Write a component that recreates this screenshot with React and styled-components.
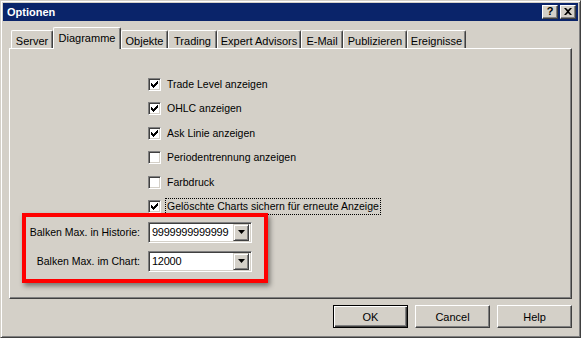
import React from 'react';
import styled, { createGlobalStyle } from 'styled-components';

const Global = createGlobalStyle`
  html, body { margin: 0; padding: 0; background: #d4d0c8; }
  body { font-family: "Liberation Sans", Arial, sans-serif; font-size: 10.5px; color: #000; }
  * { box-sizing: border-box; }
`;

const Window = styled.div`
  width: 581px;
  height: 338px;
  background: #d4d0c8;
  border: 1px solid;
  border-color: #d4d0c8 #404040 #404040 #d4d0c8;
  box-shadow: inset 1px 1px #fff, inset -1px -1px #808080;
  padding: 2px;
  display: flex;
  flex-direction: column;
`;

const TitleBar = styled.div`
  height: 18px;
  background: #0a246a;
  display: flex;
  align-items: center;
  padding: 0 2px 0 2px;
  gap: 2px;
`;

const Title = styled.div`
  flex: 1;
  color: #fff;
  font-weight: bold;
  font-size: 11px;
  padding-left: 2px;
`;

const CaptionButton = styled.div`
  width: 16px;
  height: 14px;
  background: #d4d0c8;
  border: 1px solid;
  border-color: #fff #404040 #404040 #fff;
  box-shadow: inset -1px -1px #808080;
  display: flex;
  align-items: center;
  justify-content: center;
  font-weight: bold;
  font-size: 11px;
  line-height: 1;
  padding-bottom: 1px;
`;

const Body = styled.div`
  padding: 6px 6px 0 6px;
  display: flex;
  flex-direction: column;
`;

const TabStrip = styled.div`
  height: 21px;
  display: flex;
  align-items: flex-end;
  padding-left: 2px;
`;

const Tab = styled.div`
  width: ${p => p.w}px;
  height: ${p => (p.active ? 22 : 18)}px;
  margin-bottom: ${p => (p.active ? -1 : 0)}px;
  position: relative;
  z-index: ${p => (p.active ? 2 : 0)};
  background: #d4d0c8;
  border-top: 1px solid #fff;
  border-left: 1px solid #fff;
  border-right: 1px solid #404040;
  border-top-left-radius: 2px;
  border-top-right-radius: 2px;
  box-shadow: inset -1px 0 #808080;
  display: flex;
  align-items: center;
  justify-content: center;
  font-size: 11px;
  padding-top: ${p => (p.active ? 0 : 2)}px;
  padding-bottom: ${p => (p.active ? 2 : 0)}px;
  white-space: nowrap;
`;

const Panel = styled.div`
  height: 251px;
  background: #d4d0c8;
  border: 1px solid;
  border-color: #fff #404040 #404040 #fff;
  box-shadow: inset -1px -1px #808080;
  padding: 28px 0 0 12px;
  display: flex;
  flex-direction: column;
`;

const CheckList = styled.div`
  display: flex;
  flex-direction: column;
  gap: 9.4px;
  padding-left: 126px;
`;

const CheckRow = styled.label`
  height: 15px;
  display: flex;
  align-items: center;
  gap: 4px;
`;

const Box = styled.span`
  width: 13px;
  height: 13px;
  flex: none;
  background: #fff;
  border: 1px solid;
  border-color: #808080 #fff #fff #808080;
  box-shadow: inset 1px 1px #404040, inset -1px -1px #d4d0c8;
  display: flex;
  align-items: center;
  justify-content: center;
`;

const LabelText = styled.span`
  border: 1px dotted ${p => (p.focus ? '#000' : 'transparent')};
  padding: 1px;
  line-height: 13px;
  white-space: nowrap;
`;

const RedBox = styled.div`
  width: 246px;
  height: 70px;
  margin-top: -1px;
  border: 4px solid #ff0000;
  box-shadow: 2px 3px 5px rgba(0, 0, 0, 0.45);
  display: grid;
  grid-template-columns: 114px 104px;
  grid-auto-rows: 21px;
  column-gap: 8px;
  row-gap: 8px;
  padding-top: 5px;
`;

const FieldLabel = styled.div`
  text-align: right;
  align-self: center;
  white-space: nowrap;
`;

const Combo = styled.div`
  height: 21px;
  background: #fff;
  border: 1px solid;
  border-color: #808080 #fff #fff #808080;
  box-shadow: inset 1px 1px #404040, inset -1px -1px #d4d0c8;
  padding: 2px;
  display: flex;
  align-items: center;
`;

const ComboValue = styled.div`
  flex: 1;
  padding-left: 1px;
  font-size: 11px;
  letter-spacing: -0.25px;
  white-space: nowrap;
  overflow: hidden;
`;

const DropButton = styled.div`
  width: 16px;
  height: 17px;
  flex: none;
  background: #d4d0c8;
  border: 1px solid;
  border-color: #d4d0c8 #404040 #404040 #d4d0c8;
  box-shadow: inset 1px 1px #fff, inset -1px -1px #808080;
  display: flex;
  align-items: center;
  justify-content: center;
`;

const ButtonRow = styled.div`
  display: flex;
  justify-content: flex-end;
  gap: 7px;
  margin-top: 6px;
`;

const Button = styled.div`
  width: 75px;
  height: 23px;
  background: #d4d0c8;
  border: 1px solid;
  border-color: ${p => (p.primary ? '#000' : '#fff #404040 #404040 #fff')};
  box-shadow: ${p =>
    p.primary
      ? 'inset 1px 1px #fff, inset -1px -1px #404040, inset -2px -2px #808080'
      : 'inset -1px -1px #808080'};
  display: flex;
  align-items: center;
  justify-content: center;
  font-size: 11px;
`;

const Check = () => (
  <svg width="7" height="7" viewBox="0 0 7 7">
    <path d="M0 2h1v1h1v1h1v-1h1v-1h1v-1h1v-1h1v3h-1v1h-1v1h-1v1h-1v1h-1v-1h-1v-1h-1v-1h-1z" fill="#000" />
  </svg>
);

const Arrow = () => (
  <svg width="7" height="4" viewBox="0 0 7 4">
    <path d="M0 0h7L3.5 4z" fill="#000" />
  </svg>
);

const CloseGlyph = () => (
  <svg width="8" height="7" viewBox="0 0 8 7">
    <path d="M0 0h2l2 2 2-2h2L5 3.5 8 7H6L4 5 2 7H0l3-3.5z" fill="#000" />
  </svg>
);

const tabs = [
  ['Server', 42],
  ['Diagramme', 68, true],
  ['Objekte', 47],
  ['Trading', 49],
  ['Expert Advisors', 84],
  ['E-Mail', 42],
  ['Publizieren', 64],
  ['Ereignisse', 59],
];

const checks = [
  ['Trade Level anzeigen', true],
  ['OHLC anzeigen', true],
  ['Ask Linie anzeigen', true],
  ['Periodentrennung anzeigen', false],
  ['Farbdruck', false],
  ['Gelöschte Charts sichern für erneute Anzeige', true, true],
];

export default function App() {
  return (
    <>
      <Global />
      <Window>
        <TitleBar>
          <Title>Optionen</Title>
          <CaptionButton>?</CaptionButton>
          <CaptionButton><CloseGlyph /></CaptionButton>
        </TitleBar>
        <Body>
          <TabStrip>
            {tabs.map(([t, w, a]) => (
              <Tab key={t} w={w} active={a}>{t}</Tab>
            ))}
          </TabStrip>
          <Panel>
            <CheckList>
              {checks.map(([t, c, f]) => (
                <CheckRow key={t}>
                  <Box>{c && <Check />}</Box>
                  <LabelText focus={f}>{t}</LabelText>
                </CheckRow>
              ))}
            </CheckList>
            <RedBox>
              <FieldLabel>Balken Max. in Historie:</FieldLabel>
              <Combo>
                <ComboValue>9999999999999</ComboValue>
                <DropButton><Arrow /></DropButton>
              </Combo>
              <FieldLabel>Balken Max. im Chart:</FieldLabel>
              <Combo>
                <ComboValue>12000</ComboValue>
                <DropButton><Arrow /></DropButton>
              </Combo>
            </RedBox>
          </Panel>
          <ButtonRow>
            <Button primary>OK</Button>
            <Button>Cancel</Button>
            <Button>Help</Button>
          </ButtonRow>
        </Body>
      </Window>
    </>
  );
}
